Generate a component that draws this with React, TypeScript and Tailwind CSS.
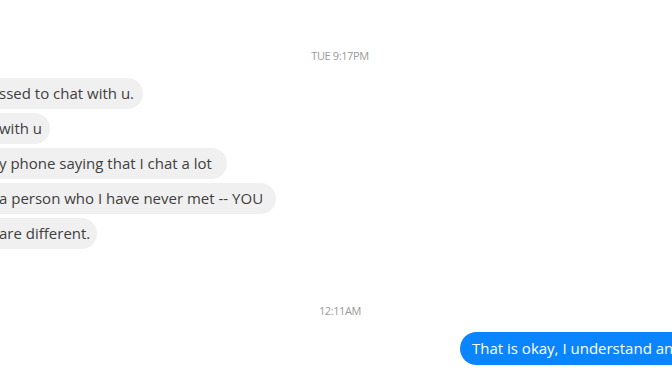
const incoming = [
  { text: 'ssed to chat with u.', w: 'w-[143px]' },
  { text: 'with u', w: 'w-[50px]' },
  { text: 'y phone saying that I chat a lot', w: 'w-[227px]' },
  { text: 'a person who I have never met -- YOU', w: 'w-[276px]' },
  { text: 'are different.', w: 'w-[97px]' },
];

const Stamp = ({ label }: { label: string }) => (
  <div className="flex justify-center pl-[8px]">
    <span className="text-[11px] leading-[12px] tracking-[-0.4px] text-[#9a9a9a] font-['Open_Sans',sans-serif]">
      {label}
    </span>
  </div>
);

export default function App() {
  return (
    <div className="flex h-[378px] w-[672px] flex-col overflow-hidden bg-white font-['Open_Sans',sans-serif]">
      <div className="pt-[50px]">
        <Stamp label="TUE 9:17PM" />
      </div>

      <div className="mt-[16px] flex flex-col gap-[4px]">
        {incoming.map((m) => (
          <div
            key={m.text}
            className={`flex h-[31px] items-center whitespace-nowrap rounded-r-full bg-[#f1f0f0] pl-0 text-[15px] text-[#404040] ${m.w}`}
          >
            <span className="-ml-[1px]">{m.text}</span>
          </div>
        ))}
      </div>

      <div className="mt-[56px]">
        <Stamp label="12:11AM" />
      </div>

      <div className="mt-[15px] flex pl-[460px]">
        <div className="flex h-[33px] w-[240px] shrink-0 items-center overflow-hidden whitespace-nowrap rounded-l-full bg-[#0a84ff] pl-[12px] text-[15px] text-white">
          That is okay, I understand and
        </div>
      </div>
    </div>
  );
}
